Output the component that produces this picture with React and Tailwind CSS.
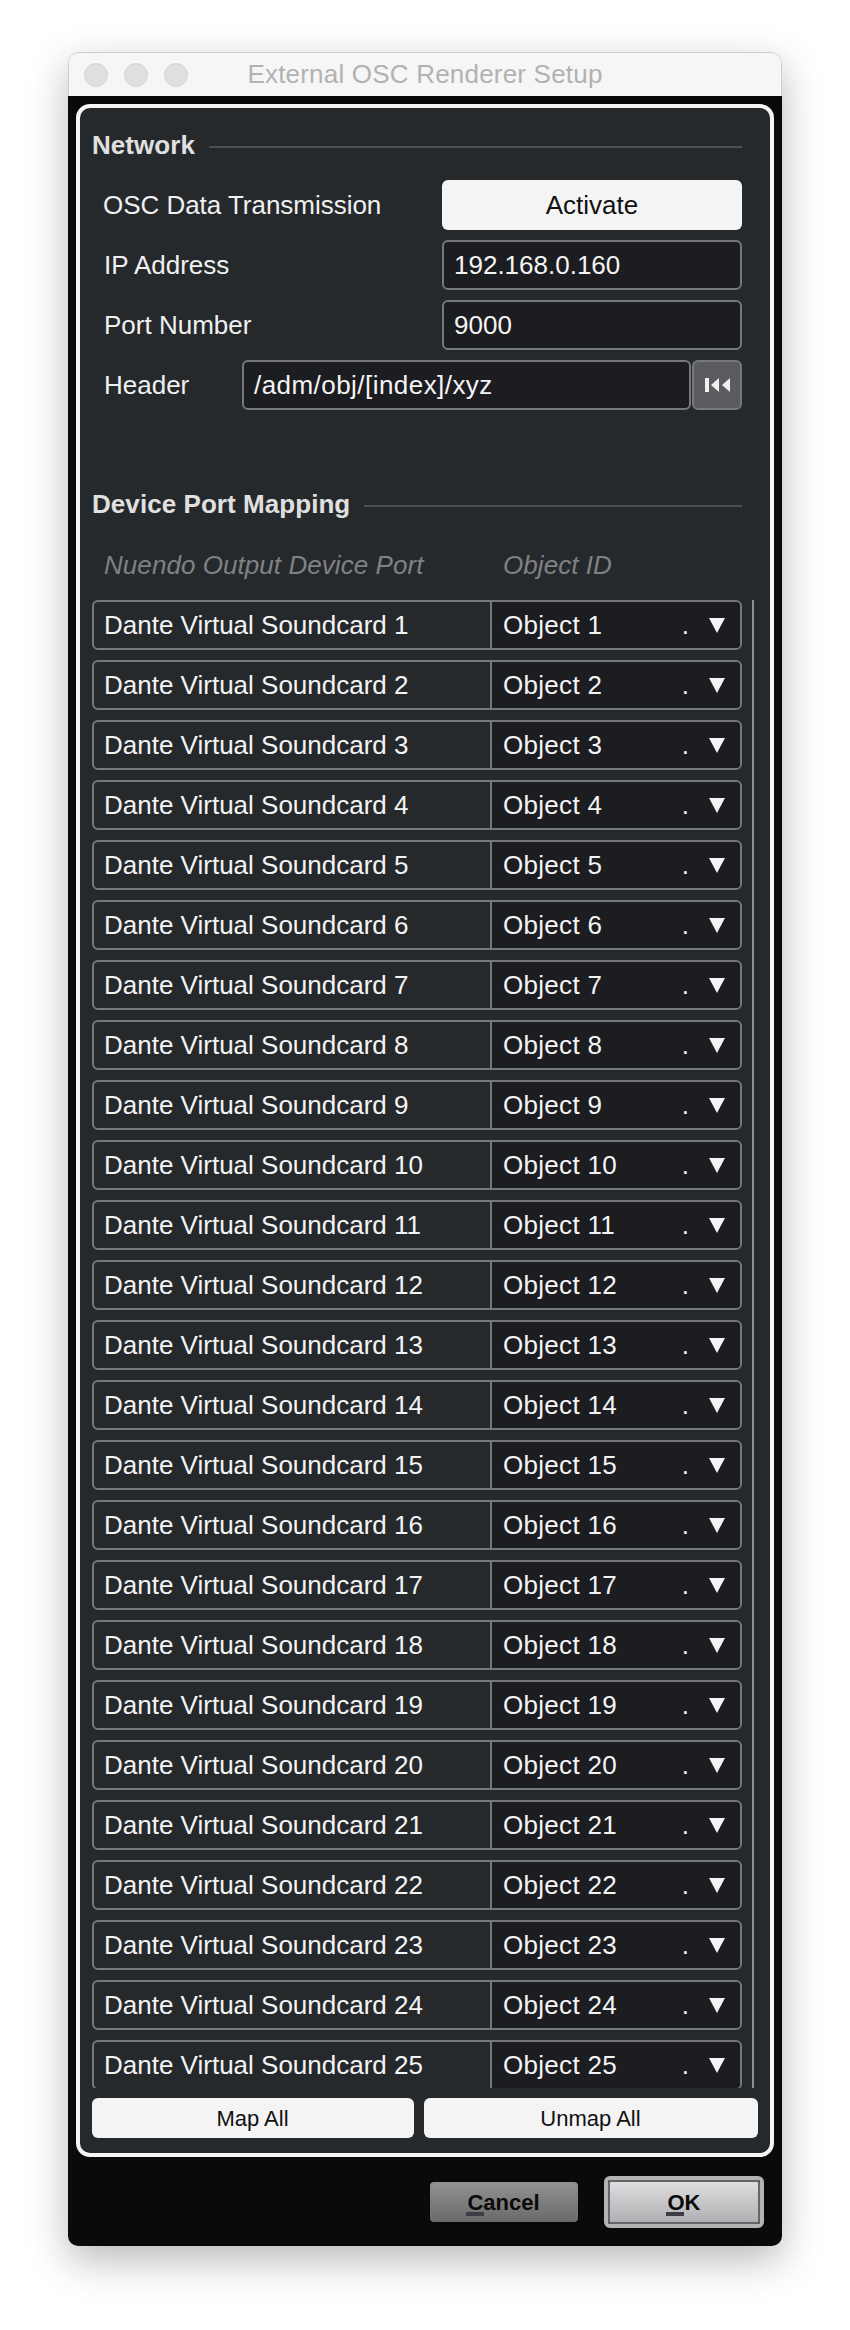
const FONT = "font-['Liberation_Sans',Arial,sans-serif]";

function Field({ children, className = "" }) {
  return (
    <div className={`flex h-[50px] items-center rounded-[6px] border-2 border-[#76787a] bg-[#1c1d21] pl-[10px] text-[26px] text-[#f4f4f4] ${className}`}>
      {children}
    </div>
  );
}

function NetRow({ label, labelClass = "pl-[12px]", children }) {
  return (
    <div className="flex h-[50px] items-center">
      <div className={`w-[350px] text-[26px] text-[#f0f0f0] ${labelClass}`}>{label}</div>
      {children}
    </div>
  );
}

function Heading({ children, className = "" }) {
  return (
    <div className={`flex h-[30px] items-center pr-[16px] text-[26px] font-bold leading-[30px] tracking-[0.06px] text-[#e0e0e0] ${className}`}>
      <span className="pb-[2px]">{children}</span>
      <div className="ml-[14px] mt-[2px] h-[2px] flex-1 bg-[#4c4f52]" />
    </div>
  );
}

function Row({ n }) {
  return (
    <div className="flex h-[50px] shrink-0 overflow-hidden rounded-[6px] border-2 border-[#76787a] text-[26px] text-[#f4f4f4]">
      <div className="flex w-[396px] items-center pl-[10px]">Dante Virtual Soundcard {n}</div>
      <div className="flex flex-1 items-center border-l-2 border-[#76787a] bg-[#1c1d21] pl-[11px]">
        <span className="flex-1 tracking-[0.3px]">Object {n}</span>
        <span className="mr-[20px]">.</span>
        <svg width="16" height="15" viewBox="0 0 16 15" className="mr-[15px]">
          <polygon points="0,0 16,0 8,15" fill="#f4f4f4" />
        </svg>
      </div>
    </div>
  );
}

export default function App() {
  const rows = Array.from({ length: 25 }, (_, i) => i + 1);
  return (
    <div className={`h-[2330px] w-[850px] overflow-hidden bg-white pl-[68px] pt-[52px] ${FONT}`}>
      <div className="flex h-[2194px] w-[714px] flex-col overflow-hidden rounded-[10px] shadow-[0_14px_40px_rgba(0,0,0,0.28)]">
        <div className="grid h-[44px] shrink-0 grid-cols-[1fr_auto_1fr] items-center rounded-t-[10px] border border-b-0 border-[#cfcfcf] bg-[#f6f6f6] px-[15px]">
          <div className="flex gap-4">
            <div className="h-6 w-6 rounded-full border border-[#d4d4d4] bg-[#dfdfdf]" />
            <div className="h-6 w-6 rounded-full border border-[#d4d4d4] bg-[#dfdfdf]" />
            <div className="h-6 w-6 rounded-full border border-[#d4d4d4] bg-[#dfdfdf]" />
          </div>
          <div className="text-[26px] tracking-[0.2px] text-[#b2b2b2]">External OSC Renderer Setup</div>
          <div />
        </div>
        <div className="flex flex-1 flex-col bg-[#0a0a0a] pl-[8px] pr-[8px] pt-[8px]">
          <div className="flex h-[2053px] flex-col rounded-[14px] border-4 border-[#f5f5f5] bg-[#26292c] px-[12px] pt-[23px]">
            <Heading>Network</Heading>
            <div className="mt-[19px] flex flex-col gap-[10px]">
              <NetRow label="OSC Data Transmission" labelClass="pl-[11px] tracking-[-0.03px]">
                <div className="flex h-[50px] w-[300px] items-center justify-center rounded-[6px] bg-[#f4f4f4] text-[26px] text-[#111]">Activate</div>
              </NetRow>
              <NetRow label="IP Address">
                <Field className="w-[300px]">192.168.0.160</Field>
              </NetRow>
              <NetRow label="Port Number">
                <Field className="w-[300px]">9000</Field>
              </NetRow>
              <div className="flex h-[50px] items-center">
                <div className="w-[150px] pl-[12px] text-[26px] text-[#f0f0f0]">Header</div>
                <Field className="w-[449px] tracking-[0.45px]">/adm/obj/[index]/xyz</Field>
                <div className="ml-[1px] flex h-[50px] w-[50px] items-center justify-center rounded-[6px] border-2 border-[#76787a] bg-[#5b5c5f]">
                  <svg width="25" height="14" viewBox="0 0 25 14">
                    <rect x="0" y="0" width="4" height="14" fill="#f0f0f0" />
                    <polygon points="14,0 14,14 6,7" fill="#f0f0f0" />
                    <polygon points="25,0 25,14 17,7" fill="#f0f0f0" />
                  </svg>
                </div>
              </div>
            </div>
            <Heading className="mt-[80px]">Device Port Mapping</Heading>
            <div className="mt-[30px] flex h-[30px] items-center text-[26px] italic tracking-[0.06px] text-[#7f8184]">
              <div className="w-[411px] pl-[12px]">Nuendo Output Device Port</div>
              <div>Object ID</div>
            </div>
            <div className="mt-[20px] flex h-[1488px] overflow-hidden">
              <div className="flex w-[650px] flex-col gap-[10px]">
                {rows.map((n) => (
                  <Row key={n} n={n} />
                ))}
              </div>
              <div className="ml-[10px] w-[2px] bg-[#8d8f91]" />
            </div>
            <div className="mt-[10px] flex h-[40px] gap-[10px] text-[22px] text-[#111]">
              <div className="flex w-[322px] items-center justify-center rounded-[6px] bg-[#f4f4f4] pr-[1px]">Map All</div>
              <div className="flex flex-1 items-center justify-center rounded-[6px] bg-[#f4f4f4] pr-[1px]">Unmap All</div>
            </div>
          </div>
          <div className="mt-[19px] flex items-center justify-end gap-[26px] pr-[10px] text-[22px] font-bold text-[#0a0a0a]">
            <div className="flex h-[40px] w-[148px] items-center justify-center rounded-[4px] bg-gradient-to-b from-[#929292] to-[#6a6a6a] pr-[1px]">
              <span className="relative">C<span className="absolute left-[-1px] top-[26px] h-[4px] w-[18px] bg-[#3c3c44]" />ancel</span>
            </div>
            <div className="flex h-[52px] w-[160px] items-center justify-center rounded-[6px] border-[4px] border-[#b4b4b4] bg-[#0a0a0a]">
              <div className="flex h-full w-full items-center justify-center rounded-[3px] border-2 border-[#66666a] bg-gradient-to-b from-[#dedee0] to-[#b0b0b3]">
                <span className="relative">O<span className="absolute left-[-1px] top-[26px] h-[4px] w-[18px] bg-[#3c3c44]" />K</span>
              </div>
            </div>
          </div>
        </div>
      </div>
    </div>
  );
}
